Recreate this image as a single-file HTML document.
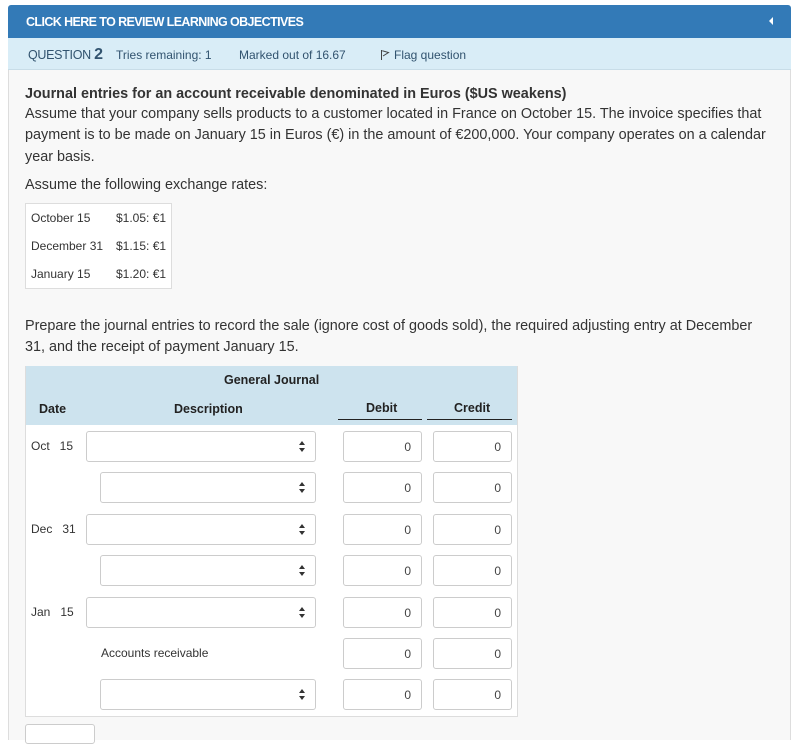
<!DOCTYPE html>
<html><head><meta charset="utf-8"><style>
*{box-sizing:border-box;margin:0;padding:0}
body{width:794px;height:730px;background:#fff;font-family:"Liberation Sans",sans-serif;color:#333;position:relative;overflow:hidden}
.a{position:absolute;white-space:nowrap}
.top{left:8px;top:5px;width:783px;height:33px;background:#337ab7;color:#fff;font-size:12.5px;font-weight:bold;letter-spacing:-0.6px;padding:10px 0 0 18px;border-radius:3px 3px 0 0}
.q{left:8px;top:38px;width:783px;height:32px;background:#d9edf7;border-bottom:1px solid #c8dde8;font-size:12px;color:#31536f}
.content{left:8px;top:70px;width:783px;height:670px;background:#f8f8f8;border-left:1px solid #ddd;border-right:1px solid #ddd}
.p{font-size:14.4px;line-height:21.3px;left:25px}
.rates{left:25px;top:203px;width:147px;height:86px;background:#fff;border:1px solid #ddd;font-size:12px}
.jt{left:25px;top:366px;width:493px;height:351px;background:#fff;border:1px solid #ddd}
.jh{left:26px;top:366px;width:491px;height:59px;background:#cde3ee}
.b{font-weight:bold;font-size:12.5px;color:#222}
.in{position:absolute;background:#fff;border:1px solid #ccc;border-radius:3px;height:31px;font-size:12px;text-align:right;padding:8px 10px 0 0;color:#444}
.sel{position:absolute;background:#fff;border:1px solid #ccc;border-radius:3px;height:31px}
.sel:after{content:"";position:absolute;right:10px;top:9px;width:0;height:0;border-left:3.5px solid transparent;border-right:3.5px solid transparent;border-bottom:4px solid #333}
.sel:before{content:"";position:absolute;right:10px;top:16px;width:0;height:0;border-left:3.5px solid transparent;border-right:3.5px solid transparent;border-top:4px solid #333}
.d{font-size:12px}
</style></head><body>
<div class="a top">CLICK HERE TO REVIEW LEARNING OBJECTIVES<span style="position:absolute;right:18px;top:12px;width:0;height:0;border-top:4px solid transparent;border-bottom:4px solid transparent;border-right:4px solid #fff"></span></div>
<div class="a q">
<span class="a" style="left:20px;top:8px;font-size:12.5px;letter-spacing:-0.3px">QUESTION <b style="font-size:16px">2</b></span>
<span class="a" style="left:108px;top:10px">Tries remaining: 1</span>
<span class="a" style="left:231px;top:10px">Marked out of 16.67</span>
<span class="a" style="left:372px;top:10px"><svg width="10" height="12" viewBox="0 0 10 12" style="vertical-align:-2px;margin-right:4px"><path d="M1.5 1V11M1.5 1.5L8.5 3.5L3 7" fill="none" stroke="#444" stroke-width="1"/></svg>Flag question</span>
</div>
<div class="a content"></div>
<div class="a p" style="top:84px;font-weight:bold">Journal entries for an account receivable denominated in Euros ($US weakens)</div>
<div class="a p" style="top:104px">Assume that your company sells products to a customer located in France on October 15. The invoice specifies that<br>payment is to be made on January 15 in Euros (€) in the amount of €200,000. Your company operates on a calendar<br>year basis.</div>
<div class="a p" style="top:175px">Assume the following exchange rates:</div>
<div class="a rates">
<span class="a" style="left:5px;top:7px">October 15</span><span class="a" style="left:90px;top:7px">$1.05: €1</span>
<span class="a" style="left:5px;top:35px">December 31</span><span class="a" style="left:90px;top:35px">$1.15: €1</span>
<span class="a" style="left:5px;top:63px">January 15</span><span class="a" style="left:90px;top:63px">$1.20: €1</span>
</div>
<div class="a p" style="top:316px">Prepare the journal entries to record the sale (ignore cost of goods sold), the required adjusting entry at December<br>31, and the receipt of payment January 15.</div>
<div class="a jt"></div>
<div class="a jh"></div>
<span class="a b" style="left:224px;top:373px">General Journal</span>
<span class="a b" style="left:39px;top:402px">Date</span>
<span class="a b" style="left:174px;top:402px">Description</span>
<span class="a b" style="left:366px;top:401px">Debit</span>
<span class="a b" style="left:454px;top:401px">Credit</span>
<div class="a" style="left:338px;top:419px;width:84px;height:1px;background:#222"></div>
<div class="a" style="left:427px;top:419px;width:85px;height:1px;background:#222"></div>

<span class="a d" style="left:31px;top:439px">Oct&nbsp;&nbsp;&nbsp;15</span>
<div class="sel" style="left:86px;top:431px;width:230px"></div>
<div class="in" style="left:343px;top:431px;width:79px">0</div><div class="in" style="left:433px;top:431px;width:79px">0</div>

<div class="sel" style="left:100px;top:472px;width:216px"></div>
<div class="in" style="left:343px;top:472px;width:79px">0</div><div class="in" style="left:433px;top:472px;width:79px">0</div>

<span class="a d" style="left:31px;top:522px">Dec&nbsp;&nbsp;&nbsp;31</span>
<div class="sel" style="left:86px;top:514px;width:230px"></div>
<div class="in" style="left:343px;top:514px;width:79px">0</div><div class="in" style="left:433px;top:514px;width:79px">0</div>

<div class="sel" style="left:100px;top:555px;width:216px"></div>
<div class="in" style="left:343px;top:555px;width:79px">0</div><div class="in" style="left:433px;top:555px;width:79px">0</div>

<span class="a d" style="left:31px;top:605px">Jan&nbsp;&nbsp;&nbsp;15</span>
<div class="sel" style="left:86px;top:597px;width:230px"></div>
<div class="in" style="left:343px;top:597px;width:79px">0</div><div class="in" style="left:433px;top:597px;width:79px">0</div>

<span class="a d" style="left:101px;top:646px">Accounts receivable</span>
<div class="in" style="left:343px;top:638px;width:79px">0</div><div class="in" style="left:433px;top:638px;width:79px">0</div>

<div class="sel" style="left:100px;top:679px;width:216px"></div>
<div class="in" style="left:343px;top:679px;width:79px">0</div><div class="in" style="left:433px;top:679px;width:79px">0</div>

<div class="a" style="left:25px;top:724px;width:70px;height:20px;background:#fff;border:1px solid #ccc;border-radius:3px"></div>
</body></html>
